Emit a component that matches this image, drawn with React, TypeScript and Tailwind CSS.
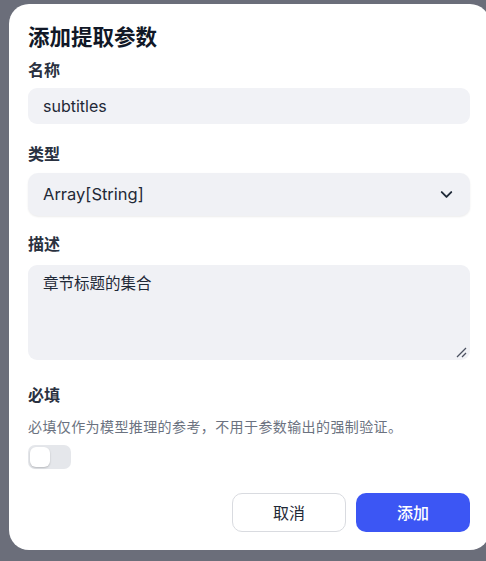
import { ChevronDown } from "lucide-react";

const font = { fontFamily: '"Inter", "Noto Sans CJK SC", sans-serif' };

function Label({ children, className = "" }: { children: React.ReactNode; className?: string }) {
  return (
    <div className={`text-[16px] leading-[20px] font-semibold text-[#2a3140] ${className}`}>
      {children}
    </div>
  );
}

export default function App() {
  return (
    <div
      className="w-[486px] h-[561px] overflow-hidden bg-[#6b6e7a] pt-[4px] pl-[9px]"
      style={font}
    >
      <div className="w-[481px] h-[546px] rounded-[20px] bg-white pt-[19px] pl-[19px] pr-[20px] flex flex-col">
        <h2 className="text-[21.5px] leading-[28px] font-bold text-[#111827]">添加提取参数</h2>

        <Label className="mt-[9px]">名称</Label>
        <input
          defaultValue="subtitles"
          className="mt-[8px] h-[36px] w-full rounded-[9px] bg-[#f1f2f6] pl-[15px] pr-[15px] text-[16px] text-[#1f2937] outline-none"
        />

        <Label className="mt-[20px]">类型</Label>
        <div className="mt-[9px] h-[43px] w-full rounded-[10px] bg-[#f0f1f5] shadow-[0_1px_2px_rgba(0,0,0,0.08)] pl-[15px] pr-[14px] flex items-center justify-between">
          <span className="text-[16.5px] text-[#1f2937]">Array[String]</span>
          <ChevronDown className="h-[19px] w-[19px] text-[#1f2937]" strokeWidth={2.4} />
        </div>

        <Label className="mt-[18px]">描述</Label>
        <div className="relative mt-[11px] h-[95px] w-full rounded-[9px] bg-[#f0f1f5] flex items-start pt-[8px]">
          <span className="ml-[15px] text-[15.5px] leading-[22px] text-[#1f2937]">章节标题的集合</span>
          <svg
            className="absolute right-[3px] bottom-[2px] h-[12px] w-[12px]"
            viewBox="0 0 12 12"
            fill="none"
            stroke="#4b5060"
            strokeWidth="1.3"
          >
            <path d="M11 2 L2 11" />
            <path d="M11 7 L7 11" />
          </svg>
        </div>

        <Label className="mt-[25px]">必填</Label>
        <p className="mt-[12px] text-[14px] leading-[20px] tracking-[0.4px] text-[#6b7280]">
          必填仅作为模型推理的参考，不用于参数输出的强制验证。
        </p>
        <div className="mt-[8px] h-[24px] w-[43px] rounded-[7px] bg-[#e5e7eb] p-[2px] flex items-center">
          <div className="h-[20px] w-[20px] rounded-[6px] bg-white shadow-[0_1px_2px_rgba(0,0,0,0.2)]" />
        </div>

        <div className="mt-[24px] flex justify-end gap-[10px]">
          <button className="h-[39px] w-[114px] rounded-[10px] border border-[#d9dbe0] bg-white text-[16px] text-[#1f2937]">
            取消
          </button>
          <button className="h-[39px] w-[114px] rounded-[10px] bg-[#3c56f4] text-[16px] font-medium text-white">
            添加
          </button>
        </div>
      </div>
    </div>
  );
}
